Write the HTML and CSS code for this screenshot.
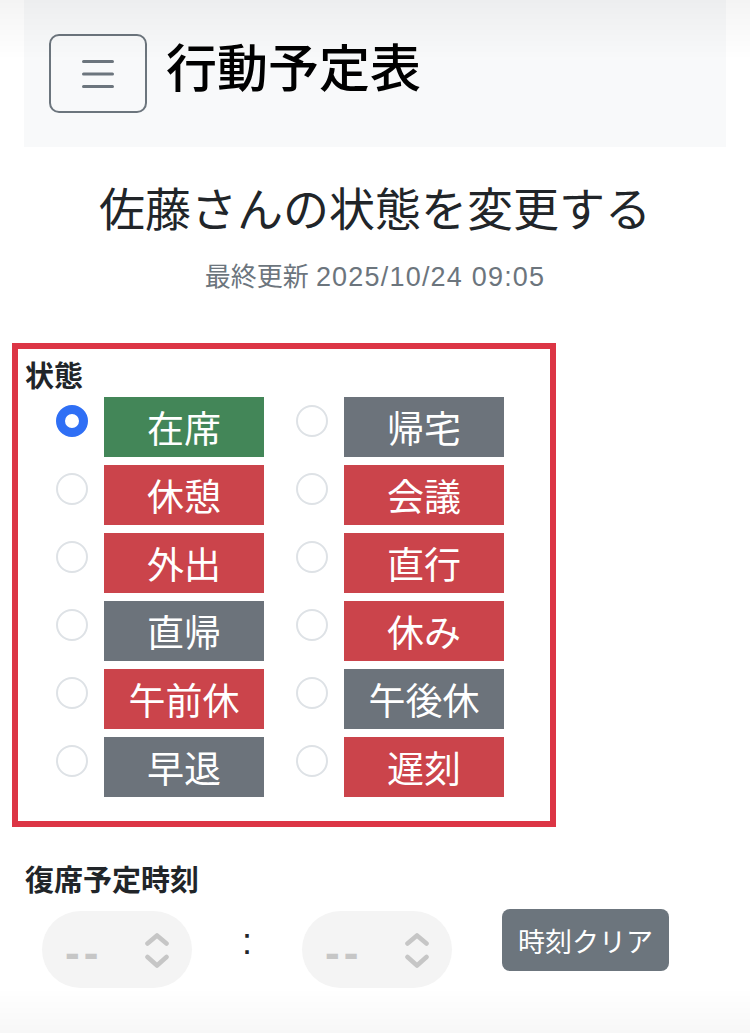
FILE: index.html
```html
<!DOCTYPE html>
<html lang="ja">
<head>
<meta charset="utf-8">
<title>行動予定表</title>
<link rel="stylesheet" href="styles.css">
</head>
<body>
<div class="page">
  <header class="header">
    <button class="menu-btn" type="button" aria-label="menu">
      <svg class="menu-icon" width="32" height="30" viewBox="0 0 32 30">
        <path d="M1.5 2.5H30.5M1.5 15H30.5M1.5 27.5H30.5" stroke="#6c757d" stroke-width="3" stroke-linecap="round" fill="none"/>
      </svg>
    </button>
    <div class="brand">行動予定表</div>
  </header>

  <h1 class="heading">佐藤さんの状態を変更する</h1>
  <p class="meta">最終更新 <span class="num">2025/10/24 09:05</span></p>

  <section class="status-box">
    <div class="label">状態</div>
    <div class="status-grid">
      <div class="item"><span class="radio checked"></span><span class="badge green">在席</span></div>
      <div class="item"><span class="radio"></span><span class="badge gray">帰宅</span></div>
      <div class="item"><span class="radio"></span><span class="badge red">休憩</span></div>
      <div class="item"><span class="radio"></span><span class="badge red">会議</span></div>
      <div class="item"><span class="radio"></span><span class="badge red">外出</span></div>
      <div class="item"><span class="radio"></span><span class="badge red">直行</span></div>
      <div class="item"><span class="radio"></span><span class="badge gray">直帰</span></div>
      <div class="item"><span class="radio"></span><span class="badge red">休み</span></div>
      <div class="item"><span class="radio"></span><span class="badge red">午前休</span></div>
      <div class="item"><span class="radio"></span><span class="badge gray">午後休</span></div>
      <div class="item"><span class="radio"></span><span class="badge gray">早退</span></div>
      <div class="item"><span class="radio"></span><span class="badge red">遅刻</span></div>
    </div>
  </section>

  <section class="time-section">
    <div class="label">復席予定時刻</div>
    <div class="time-row">
      <div class="picker">
        <span class="dashes">--</span>
        <svg class="chev" width="24" height="35" viewBox="0 0 24 35">
          <path d="M2.5 10.5L12 2.5L21.5 10.5M2.5 24L12 32.5L21.5 24" stroke="#c6c6c6" stroke-width="4.6" stroke-linecap="round" stroke-linejoin="round" fill="none"/>
        </svg>
      </div>
      <span class="colon">:</span>
      <div class="picker">
        <span class="dashes">--</span>
        <svg class="chev" width="24" height="35" viewBox="0 0 24 35">
          <path d="M2.5 10.5L12 2.5L21.5 10.5M2.5 24L12 32.5L21.5 24" stroke="#c6c6c6" stroke-width="4.6" stroke-linecap="round" stroke-linejoin="round" fill="none"/>
        </svg>
      </div>
      <button class="clear-btn" type="button">時刻クリア</button>
    </div>
  </section>
</div>
<div class="fade-top"></div>
<div class="fade-bottom"></div>
</body>
</html>
```
FILE: styles.css
```css
html, body {
  margin: 0;
  padding: 0;
  background: #ffffff;
}
body {
  font-family: "Liberation Sans", "Noto Sans CJK JP", sans-serif;
  color: #212529;
}
.page {
  padding: 0 12px;
}
.header {
  margin: 0 12px;
  height: 147px;
  background: #f8f9fa;
  display: flex;
  align-items: center;
  padding-left: 25px;
  gap: 19px;
}
.menu-btn {
  width: 98px;
  height: 79px;
  box-sizing: border-box;
  border: 2px solid #6c757d;
  border-radius: 10px;
  background: transparent;
  display: flex;
  align-items: center;
  justify-content: center;
  padding: 0;
  margin: 0;
}
.brand {
  font-family: "Noto Sans CJK JP", sans-serif;
  font-weight: 500;
  font-size: 51px;
  line-height: 1;
  color: #000;
  padding-bottom: 16px;
}
.heading {
  font-family: "Noto Sans CJK JP", sans-serif;
  font-weight: 400;
  font-size: 46px;
  line-height: 55px;
  text-align: center;
  margin: 32px 0 0;
}
.meta {
  font-size: 26px;
  line-height: 39px;
  color: #6c757d;
  text-align: center;
  margin: 24px 0 0;
}
.num {
  font-size: 27px;
  letter-spacing: 1.2px;
}
.status-box {
  margin-top: 46px;
  width: 544px;
  box-sizing: border-box;
  border: 6px solid #dc3545;
  padding: 7px 0 24px 7px;
}
.label {
  font-family: "Noto Sans CJK JP", sans-serif;
  font-weight: 700;
  font-size: 29px;
  line-height: 36px;
}
.status-grid {
  margin: 5px 0 0 31px;
  display: grid;
  grid-template-columns: 208px 208px;
  column-gap: 32px;
  row-gap: 8px;
}
.item {
  display: flex;
  align-items: flex-start;
  gap: 16px;
}
.radio {
  width: 32px;
  height: 32px;
  margin-top: 8px;
  box-sizing: border-box;
  border: 2px solid #dee2e6;
  border-radius: 50%;
  background: #fff;
}
.radio.checked {
  border: 9.5px solid #2f6ff5;
}
.badge {
  width: 160px;
  height: 60px;
  display: flex;
  align-items: center;
  justify-content: center;
  font-family: "Noto Sans CJK JP", sans-serif;
  font-size: 37px;
  color: #fff;
}
.green { background: #438658; }
.red { background: #cb444b; }
.gray { background: #6c737b; }

.time-section {
  margin-top: 33px;
  padding-left: 13px;
}
.time-row {
  margin-top: 13px;
  display: flex;
  align-items: flex-start;
}
.picker {
  margin-top: 2px;
  width: 150px;
  height: 77px;
  border-radius: 38.5px;
  background: #f4f4f4;
  display: flex;
  align-items: center;
  box-sizing: border-box;
  padding-left: 23px;
}
.picker:first-child {
  margin-left: 17px;
}
.dashes {
  font-family: "Liberation Sans", sans-serif;
  font-weight: 700;
  font-size: 44px;
  line-height: 1;
  letter-spacing: 4px;
  color: #c6c6c6;
  margin-top: 6px;
  width: 80px;
}
.chev {
  display: block;
  margin-top: 2px;
}
.colon {
  width: 110px;
  text-align: center;
  font-family: "Liberation Sans", sans-serif;
  font-size: 36px;
  line-height: 1;
  font-weight: 400;
  color: #212529;
  margin-top: 15px;
}
.clear-btn {
  margin-left: 50px;
  width: 167px;
  height: 62px;
  border: 0;
  border-radius: 8px;
  background: #6c757d;
  color: #fff;
  font-family: "Noto Sans CJK JP", sans-serif;
  font-size: 27px;
  padding: 0;
}
.fade-top {
  position: fixed;
  left: 0;
  right: 0;
  top: 0;
  height: 60px;
  background: linear-gradient(rgba(0, 0, 0, 0.045), rgba(0, 0, 0, 0));
  pointer-events: none;
}
.fade-bottom {
  position: fixed;
  left: 0;
  right: 0;
  bottom: 0;
  height: 45px;
  background: linear-gradient(rgba(0, 0, 0, 0), rgba(0, 0, 0, 0.03));
  pointer-events: none;
}
```
